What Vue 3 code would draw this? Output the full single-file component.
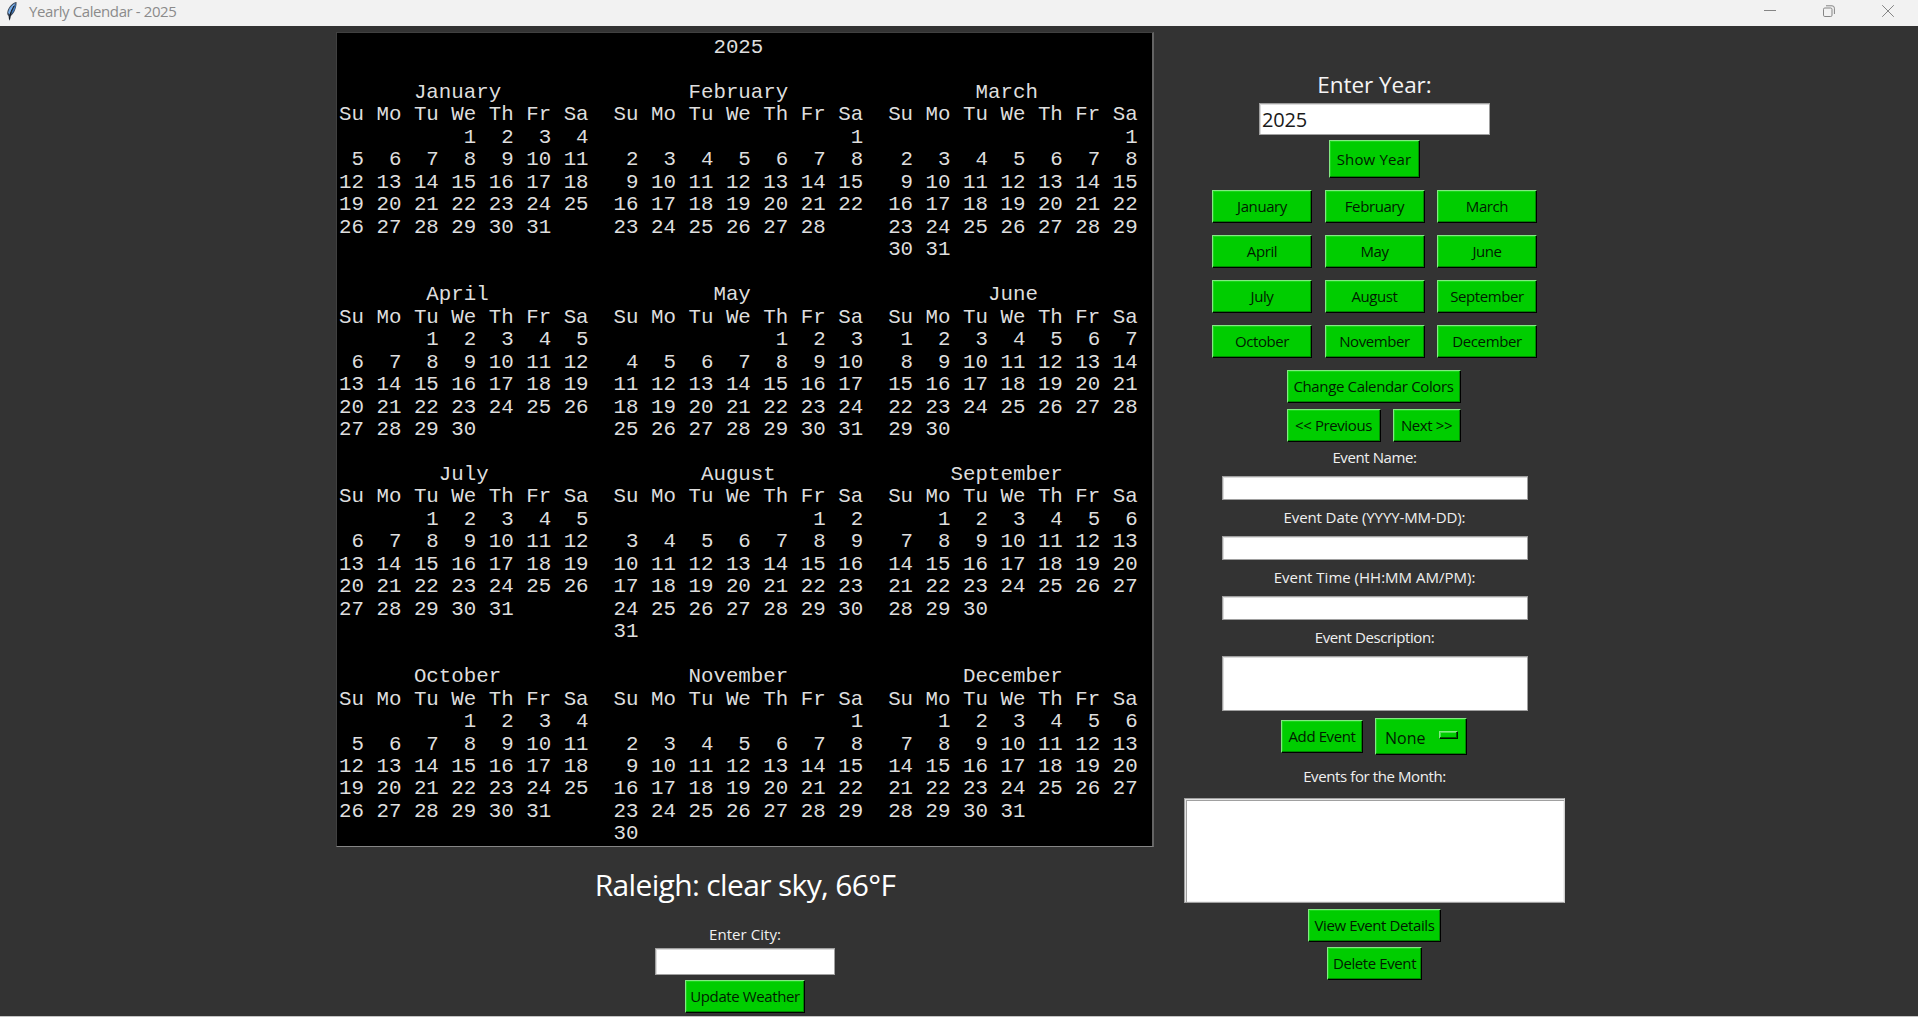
<script setup>
const year = 2025
const months = ['January', 'February', 'March', 'April', 'May', 'June', 'July', 'August', 'September', 'October', 'November', 'December']

const center = (text, width) => {
  const left = Math.floor((width - text.length) / 2)
  return (' '.repeat(left) + text).padEnd(width)
}

function weeksOf(month) {
  const first = new Date(year, month, 1).getDay()
  const count = new Date(year, month + 1, 0).getDate()
  const cells = Array(first).fill('  ')
  for (let d = 1; d <= count; d++) cells.push(String(d).padStart(2))
  const weeks = []
  while (cells.length) weeks.push(cells.splice(0, 7).join(' ').padEnd(20))
  return weeks
}

function formatYear() {
  const lines = [center(String(year), 64)]
  for (let q = 0; q < 12; q += 3) {
    const trio = [q, q + 1, q + 2]
    lines.push('')
    lines.push(trio.map((m) => center(months[m], 20)).join('  '))
    lines.push(trio.map(() => 'Su Mo Tu We Th Fr Sa').join('  '))
    const weeks = trio.map(weeksOf)
    const rows = Math.max(...weeks.map((w) => w.length))
    for (let r = 0; r < rows; r++) {
      lines.push(weeks.map((w) => w[r] ?? ' '.repeat(20)).join('  '))
    }
  }
  return lines.join('\n')
}

const calendarText = formatYear()
</script>

<template>
  <div class="window">
    <header class="titlebar">
      <svg class="feather" width="12" height="20" viewBox="0 0 12 20">
        <path d="M10.500 1C7 1.500 2.200 6 1.300 11.200c-.2 1.600.2 3 1.200 3.800l.6 4 .8.6.7-4.400C8.300 12.600 10.900 6 10.500 1z" fill="#3a4656" />
        <path d="M9.600 2C6 4 2.600 7.500 2.200 11.800l1.200 1.800L9.600 2z" fill="#78aeea" />
        <path d="M9.800 2.600L5 13C7.800 11.300 9.900 7 9.800 2.600z" fill="#3a7cc8" />
        <path d="M8 5C6 8 4.200 12 3.500 18" fill="none" stroke="#10151c" stroke-width="1" />
      </svg>
      <span class="title">Yearly Calendar - 2025</span>
      <div class="controls">
        <svg width="12" height="12" viewBox="0 0 12 12"><path d="M0 5.500h12" /></svg>
        <svg width="12" height="12" viewBox="0 0 12 12">
          <rect x=".5" y="3" width="8.500" height="8.500" rx="1.300" />
          <path d="M3 .8h6a2.400 2.400 0 0 1 2.400 2.400V9" />
        </svg>
        <svg width="12" height="12" viewBox="0 0 12 12"><path d="M.2.2l11.600 11.600M11.800.2L.2 11.800" /></svg>
      </div>
    </header>

    <main class="body">
      <section class="left">
        <pre class="calendar">{{ calendarText }}</pre>
        <div class="weather">Raleigh: clear sky, 66°F</div>
        <div class="label city">Enter City:</div>
        <div class="entry city-entry"></div>
        <button class="btn update">Update Weather</button>
      </section>

      <section class="right">
        <div class="year-label">Enter Year:</div>
        <div class="entry year-entry">2025</div>
        <button class="btn show">Show Year</button>
        <div class="months">
          <button v-for="m in months" :key="m" class="btn">{{ m }}</button>
        </div>
        <div class="actions">
          <button class="btn colors">Change Calendar Colors</button>
          <div class="nav">
            <button class="btn prev">&lt;&lt; Previous</button>
            <button class="btn next">Next &gt;&gt;</button>
          </div>
        </div>
        <div class="label name">Event Name:</div>
        <div class="entry field"></div>
        <div class="label date">Event Date (YYYY-MM-DD):</div>
        <div class="entry field"></div>
        <div class="label time">Event Time (HH:MM AM/PM):</div>
        <div class="entry field"></div>
        <div class="label">Event Description:</div>
        <div class="entry description"></div>
        <div class="add-row">
          <button class="btn add">Add Event</button>
          <button class="btn option"><span>None</span><i class="indicator"></i></button>
        </div>
        <div class="label events">Events for the Month:</div>
        <div class="listbox"></div>
        <button class="btn view">View Event Details</button>
        <button class="btn delete">Delete Event</button>
      </section>
    </main>
  </div>
</template>

<style>
body {
  margin: 0;
  overflow: hidden;
}
</style>

<style scoped>
.window {
  box-sizing: border-box;
  width: 1918px;
  height: 1017px;
  display: flex;
  flex-direction: column;
  background: #333;
  border-bottom: 1px solid #c4c4c4;
  font-family: "Open Sans", "Noto Sans", sans-serif;
  font-size: 15px;
  overflow: hidden;
}
.titlebar {
  flex: none;
  height: 26px;
  display: flex;
  align-items: center;
  background: #f2f2f2;
  color: #8b8b8b;
}
.feather {
  margin: -5px 0 0 6px;
}
.title {
  margin: -5px 0 0 11px;
  font-size: 15px;
  letter-spacing: -0.4px;
  white-space: nowrap;
}
.controls {
  display: flex;
  gap: 47px;
  margin: -4px 24px 0 auto;
}
.controls svg {
  fill: none;
  stroke: #858585;
  stroke-width: 1;
}
.body {
  flex: 1;
  display: flex;
  align-items: flex-start;
  padding-left: 336px;
}
.left {
  width: 818px;
  display: flex;
  flex-direction: column;
  align-items: center;
  padding-top: 6px;
}
.right {
  width: 381px;
  margin-left: 30px;
  display: flex;
  flex-direction: column;
  align-items: center;
  padding-top: 41px;
}
.calendar {
  box-sizing: border-box;
  width: 818px;
  height: 815px;
  margin: 0;
  padding: 4px 0 0 2px;
  border: 1px solid #404040;
  border-right: 2px solid #646464;
  border-bottom-color: #868686;
  background: #000;
  color: #dedede;
  font: 20.810px/22.470px "Liberation Mono", monospace;
}
.weather {
  height: 48px;
  margin-top: 14px;
  line-height: 48px;
  font-size: 30px;
  letter-spacing: -0.65px;
  color: #fff;
  white-space: nowrap;
}
.label {
  height: 24px;
  line-height: 24px;
  margin: 5px 0 7px;
  color: #f0f0f0;
  letter-spacing: -0.4px;
  white-space: nowrap;
}
.city {
  margin: 13px 0 2px;
  letter-spacing: 0.05px;
}
.entry {
  box-sizing: border-box;
  background: #fff;
  border: 1px solid #a0a0a0;
  box-shadow: inset 1px 1px 0 #dcdcdc;
}
.city-entry {
  width: 180px;
  height: 27px;
}
.btn {
  box-sizing: border-box;
  height: 33px;
  padding: 0 0 1px;
  border: 1px solid;
  border-color: #83e883 #000 #000 #83e883;
  background: #00cd00;
  box-shadow: inset -1px -1px 0 #008a00, inset 1px 1px 0 #1ad81a;
  font: inherit;
  color: #001c00;
  letter-spacing: -0.4px;
  white-space: nowrap;
}
.update {
  width: 120px;
  margin-top: 5px;
}
.year-label {
  height: 35px;
  line-height: 35px;
  margin-bottom: 1px;
  font-size: 22.500px;
  letter-spacing: -0.05px;
  color: #f5f5f5;
}
.year-entry {
  width: 231px;
  height: 32px;
  padding-left: 2px;
  line-height: 32px;
  font-size: 20px;
  letter-spacing: -0.2px;
  color: #1a1a1a;
}
.show {
  width: 91px;
  height: 38px;
  margin: 5px 1px 0 0;
  padding-bottom: 0;
  letter-spacing: 0.15px;
}
.months {
  display: grid;
  grid-template-columns: repeat(3, 100px);
  column-gap: 12.500px;
  row-gap: 12px;
  margin: 12px 0;
}
.actions {
  margin-right: 2px;
}
.colors {
  width: 174px;
  letter-spacing: -0.35px;
}
.nav {
  display: flex;
  gap: 12px;
  margin-top: 6px;
}
.prev {
  width: 94px;
}
.next {
  width: 68px;
}
.name {
  margin-top: 3px;
}
.date {
  letter-spacing: -0.1px;
}
.time {
  letter-spacing: 0;
}
.field {
  width: 306px;
  height: 24px;
}
.description {
  width: 306px;
  height: 55px;
}
.add-row {
  display: flex;
  align-items: center;
  gap: 12px;
  margin: 7px 1px 0 0;
}
.add {
  width: 82px;
  margin-top: -1px;
}
.option {
  width: 92px;
  height: 37px;
  display: flex;
  align-items: center;
  justify-content: space-between;
  padding: 2px 8px 0 9px;
  font-size: 16px;
  letter-spacing: 0;
}
.indicator {
  box-sizing: border-box;
  width: 19px;
  height: 8px;
  margin-top: -5px;
  border: 1px solid;
  border-color: #83e883 #001800 #001800 #83e883;
  box-shadow: inset -1px -1px 0 #006000, inset 1px 1px 0 #50e050;
}
.events {
  margin: 9px 0 10px;
}
.listbox {
  box-sizing: border-box;
  width: 381px;
  height: 105px;
  background: #fff;
  border: 1px solid #a0a0a0;
  border-right-color: #d0d0d0;
  box-shadow: inset 1px 1px 0 #e3e3e3, inset 2px 2px 0 #a0a0a0, inset -1px -1px 0 #eee;
}
.view {
  width: 133px;
  margin-top: 6px;
}
.delete {
  width: 95px;
  margin-top: 5px;
}
</style>
